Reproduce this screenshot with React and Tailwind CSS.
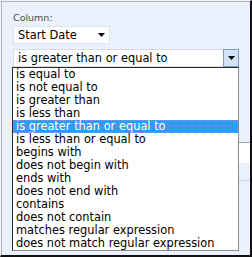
import React from 'react';

const options = [
  'is equal to',
  'is not equal to',
  'is greater than',
  'is less than',
  'is greater than or equal to',
  'is less than or equal to',
  'begins with',
  'does not begin with',
  'ends with',
  'does not end with',
  'contains',
  'does not contain',
  'matches regular expression',
  'does not match regular expression',
];

const selected = 4;

function Arrow() {
  return (
    <svg width="7" height="4" viewBox="0 0 7 4">
      <polygon points="0,0 7,0 3.5,4" fill="#000" />
    </svg>
  );
}

export default function App() {
  return (
    <div className="relative w-[252px] h-[257px] overflow-hidden bg-[#ebf1fc] border-l border-t border-l-[#f4f4f4] border-t-[#f4f4f4] border-r-2 border-b-2 border-r-[#111] border-b-[#111] shadow-[inset_1px_1px_0_#a9b3c4] pl-[12px] pt-[11px] font-['DejaVu_Sans',sans-serif]">
      {/* filter form */}
      <div className="text-[9.5px] leading-[12px] text-[#4a4a4a]">Column:</div>
      <div className="mt-[2px] w-[97px] h-[18px] bg-white border border-[#dfe3ea] flex items-center justify-between pl-[4px] pr-[4px]">
        <span className="text-[11.4px] leading-[16px] text-black">Start Date</span>
        <Arrow />
      </div>
      <div className="mt-[5px] w-[226px] h-[18px] bg-white border border-[#d7dde6] flex items-center">
        <span className="flex-1 pl-[4px] text-[11.4px] leading-[16px] text-black whitespace-nowrap overflow-hidden">
          is greater than or equal to
        </span>
        <div className="w-[16px] h-[18px] -my-px -mr-px bg-[#d3e2f7] border border-[#7f9dc4] flex items-center justify-center">
          <Arrow />
        </div>
      </div>

      {/* content behind the open list */}
      <div className="mt-[75px] -ml-px h-[21px] bg-white border-t border-[#9aa3b0]" />
      <div className="mt-[17px] -ml-px border-t border-[#cdd5e1]" />

      {/* open dropdown list */}
      <div className="absolute left-[11px] top-[66px] w-[227px] bg-white border border-l-[#2b2b2b] border-t-[#2b2b2b] border-r-[#8a8a8a] border-b-[#8a8a8a]">
        {options.map((o, i) => (
          <div
            key={o}
            className={
              i === selected
                ? 'h-[13px] leading-[13px] pl-[3px] text-[11.4px] whitespace-nowrap bg-[#3399ff] text-white outline outline-1 outline-dotted outline-[#d58a3c] -outline-offset-1'
                : 'h-[13px] leading-[13px] pl-[3px] text-[11.4px] whitespace-nowrap text-black'
            }
          >
            {o}
          </div>
        ))}
      </div>
    </div>
  );
}
